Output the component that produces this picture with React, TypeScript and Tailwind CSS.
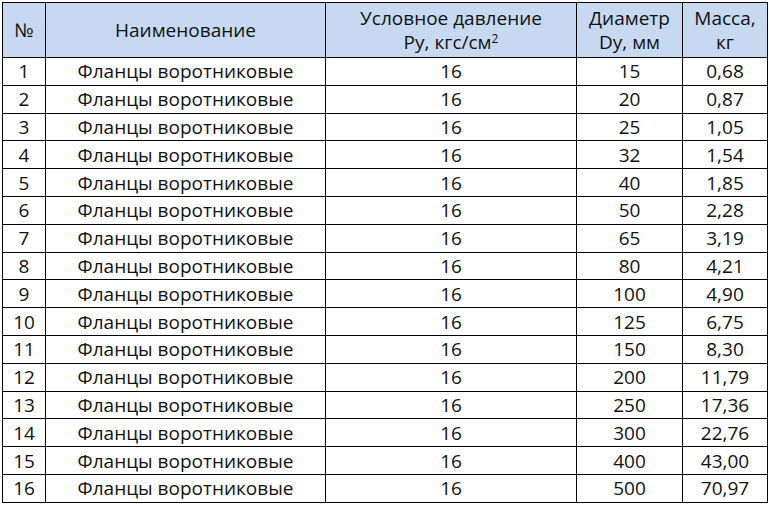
const sizes = [
  ["15", "0,68"],
  ["20", "0,87"],
  ["25", "1,05"],
  ["32", "1,54"],
  ["40", "1,85"],
  ["50", "2,28"],
  ["65", "3,19"],
  ["80", "4,21"],
  ["100", "4,90"],
  ["125", "6,75"],
  ["150", "8,30"],
  ["200", "11,79"],
  ["250", "17,36"],
  ["300", "22,76"],
  ["400", "43,00"],
  ["500", "70,97"],
];

const cell = "border border-black text-center align-middle p-0";

export default function App() {
  return (
    <div className="bg-white w-[769px] h-[506px] pt-[2px] pl-[2px] font-['Open_Sans',sans-serif] text-[19px] leading-[24px] text-[#111]">
      <table className="border-collapse table-fixed w-[765px]">
        <colgroup>
          <col className="w-[43px]" />
          <col className="w-[280px]" />
          <col className="w-[251px]" />
          <col className="w-[106px]" />
          <col className="w-[85px]" />
        </colgroup>
        <thead>
          <tr className="h-[55px] bg-[#c6d9f1]">
            <th className={`${cell} font-normal`}>№</th>
            <th className={`${cell} font-normal`}>Наименование</th>
            <th className={`${cell} font-normal`}>
              Условное давление
              <br />
              Ру, кгс/см<sup className="text-[12px]">2</sup>
            </th>
            <th className={`${cell} font-normal`}>
              Диаметр
              <br />
              Dу, мм
            </th>
            <th className={`${cell} font-normal`}>
              Масса,
              <br />
              кг
            </th>
          </tr>
        </thead>
        <tbody>
          {sizes.map(([dn, mass], i) => (
            <tr key={dn} className="h-[27.8px]">
              <td className={cell}>{i + 1}</td>
              <td className={cell}>Фланцы воротниковые</td>
              <td className={cell}>16</td>
              <td className={cell}>{dn}</td>
              <td className={cell}>{mass}</td>
            </tr>
          ))}
        </tbody>
      </table>
    </div>
  );
}
